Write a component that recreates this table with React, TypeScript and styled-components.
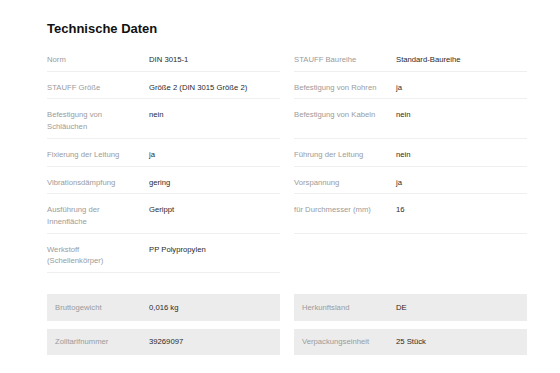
import React from 'react';
import styled, { createGlobalStyle } from 'styled-components';

const GlobalStyle = createGlobalStyle`
  html, body {
    margin: 0;
    padding: 0;
    background: #ffffff;
    font-family: 'Liberation Sans', Arial, Helvetica, sans-serif;
    -webkit-font-smoothing: antialiased;
  }
`;

const Page = styled.section`
  width: 480px;
  padding: 21px 0 0 47px;
`;

const Title = styled.h2`
  margin: 0 0 7px;
  font-size: 13px;
  line-height: 16px;
  font-weight: 700;
  color: #111111;
`;

const SpecGrid = styled.div`
  display: grid;
  grid-template-columns: 233px 233px;
  column-gap: 14px;
`;

const SpecRow = styled.div<{ $empty?: boolean }>`
  display: grid;
  grid-template-columns: 102px 1fr;
  padding: 10px 0 5px;
  border-bottom: 1px solid ${(p) => (p.$empty ? 'transparent' : '#efefef')};
  font-size: 7.7px;
  line-height: 1.52;
`;

const Label = styled.div`
  color: #9b9b9b;
  padding-right: 15px;
`;

const Value = styled.div`
  color: #2a2a2a;
`;

const BoxGrid = styled.div`
  display: grid;
  grid-template-columns: 233px 233px;
  column-gap: 14px;
  row-gap: 8px;
  margin-top: 21px;
`;

const Box = styled.div`
  display: grid;
  grid-template-columns: 94px 1fr;
  align-items: center;
  padding: 7.5px 8px;
  background: #ececec;
  font-size: 7.7px;
  line-height: 1.5;
`;

type Spec = [string, string] | null;

const specs: Spec[] = [
  ['Norm', 'DIN 3015-1'],
  ['STAUFF Baureihe', 'Standard-Baureihe'],
  ['STAUFF Größe', 'Größe 2 (DIN 3015 Größe 2)'],
  ['Befestigung von Rohren', 'ja'],
  ['Befestigung von Schläuchen', 'nein'],
  ['Befestigung von Kabeln', 'nein'],
  ['Fixierung der Leitung', 'ja'],
  ['Führung der Leitung', 'nein'],
  ['Vibrationsdämpfung', 'gering'],
  ['Vorspannung', 'ja'],
  ['Ausführung der Innenfläche', 'Gerippt'],
  ['für Durchmesser (mm)', '16'],
  ['Werkstoff (Schellenkörper)', 'PP Polypropylen'],
  null,
];

const extras: [string, string][] = [
  ['Bruttogewicht', '0,016 kg'],
  ['Herkunftsland', 'DE'],
  ['Zolltarifnummer', '39269097'],
  ['Verpackungseinheit', '25 Stück'],
];

export default function App() {
  return (
    <>
      <GlobalStyle />
      <Page>
        <Title>Technische Daten</Title>
        <SpecGrid>
          {specs.map((s, i) =>
            s ? (
              <SpecRow key={i}>
                <Label>{s[0]}</Label>
                <Value>{s[1]}</Value>
              </SpecRow>
            ) : (
              <SpecRow key={i} $empty />
            )
          )}
        </SpecGrid>
        <BoxGrid>
          {extras.map(([label, value]) => (
            <Box key={label}>
              <Label>{label}</Label>
              <Value>{value}</Value>
            </Box>
          ))}
        </BoxGrid>
      </Page>
    </>
  );
}
